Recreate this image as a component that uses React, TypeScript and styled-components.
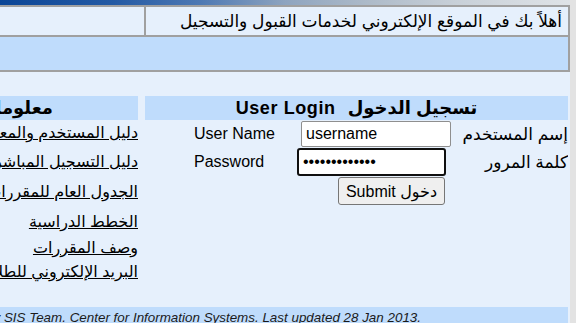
import React from "react";
import styled, { createGlobalStyle } from "styled-components";

const GlobalStyle = createGlobalStyle`
    html, body {
        margin: 0;
        padding: 0;
        background: #e3e3e3;
        overflow: hidden;
    }
    body {
        font-family: "Liberation Sans", "DejaVu Sans", Arial, sans-serif;
        font-size: 16px;
        color: #000;
    }
`;

const Page = styled.div`
    display: flex;
    width: 576px;
    height: 323px;
    overflow: hidden;
`;

const Main = styled.div`
    direction: rtl;
    width: 570px;
    flex: none;
    background: #e6f0fc;
    display: flex;
    flex-direction: column;
`;

const Strip = styled.div`
    flex: 1;
    background: #e3e3e3;
`;

const Banner = styled.div`
    height: 5px;
    background: linear-gradient(to right, #0a4596 0%, #245aa4 20%, #4d78b3 35%, #8ea4bf 50%, #aebbc9 65%, #c8d0d8 80%, #dfe3e7 100%);
`;

const HeadTable = styled.div`
    border-top: 2px solid #a0a0a0;
    border-right: 2px solid #a0a0a0;
    border-bottom: 2px solid #a0a0a0;
`;

const WelcomeRow = styled.div`
    display: grid;
    grid-template-columns: 422px 1fr;
    height: 28px;
    border-bottom: 2px solid #a0a0a0;
`;

const WelcomeCell = styled.div`
    display: flex;
    align-items: center;
    padding-right: 6px;
    white-space: nowrap;
    font-size: 17px;
`;

const EmptyCell = styled.div`
    border-right: 2px solid #a0a0a0;
`;

const BlueRow = styled.div`
    height: 33px;
    background: #bfdcfc;
`;

const Content = styled.div`
    display: flex;
    gap: 7px;
    padding-right: 2px;
    margin-top: 24px;
`;

const LoginPanel = styled.div`
    width: 423px;
    flex: none;
`;

const InfoPanel = styled.div`
    width: 138px;
    flex: none;
    overflow: hidden;
`;

const PanelHead = styled.div<{ $center?: boolean; $pad?: number }>`
    height: 24px;
    background: #bfdcfc;
    display: flex;
    align-items: center;
    justify-content: ${(p) => (p.$center ? "center" : "flex-start")};
    padding-right: ${(p) => p.$pad ?? 0}px;
    font-weight: bold;
    font-size: 18px;
    white-space: nowrap;
`;

const English = styled.span`
    letter-spacing: 0.6px;
    margin-right: 12px;
`;

const FormGrid = styled.div`
    direction: ltr;
    display: grid;
    grid-template-columns: 103px 154px 1fr;
    grid-template-rows: 26px 28px 28px;
    row-gap: 1px;
    margin-top: 1px;
    padding-left: 49px;
`;

const Label = styled.div`
    display: flex;
    align-items: center;
    white-space: nowrap;
`;

const ArabicLabel = styled(Label)`
    direction: rtl;
    justify-content: flex-start;
    font-size: 17px;
    overflow: hidden;
`;

const TextInput = styled.input<{ $focused?: boolean; $shift?: number; $width?: number }>`
    box-sizing: border-box;
    width: ${(p) => p.$width ?? 150}px;
    height: 100%;
    margin: 0 0 0 ${(p) => p.$shift ?? 0}px;
    padding: 0 4px;
    font-family: "Liberation Sans", Arial, sans-serif;
    font-size: 16px;
    color: #000;
    background: #fff;
    border: ${(p) => (p.$focused ? "2px solid #101010" : "1px solid #8f8f8f")};
    border-radius: ${(p) => (p.$focused ? "3px" : "2px")};
    outline: none;
`;

const ButtonCell = styled.div`
    grid-column: 2 / 4;
    padding-left: 41px;
`;

const SubmitButton = styled.button`
    box-sizing: border-box;
    width: 107px;
    height: 28px;
    font-family: "Liberation Sans", "DejaVu Sans", Arial, sans-serif;
    font-size: 16px;
    color: #000;
    background: #efefef;
    border: 1px solid #767676;
    border-radius: 3px;
    padding: 0;
`;

const LinkList = styled.div`
    display: flex;
    flex-direction: column;
    align-items: flex-start;
`;

const InfoLink = styled.a<{ $top: number }>`
    display: block;
    margin-top: ${(p) => p.$top}px;
    line-height: 20px;
    font-size: 16px;
    color: #000;
    text-decoration: underline;
    white-space: nowrap;
`;

const Footer = styled.div`
    margin-top: 25px;
    margin-right: 2px;
    height: 16px;
    background: #bfdcfc;
    direction: ltr;
    display: flex;
    justify-content: flex-end;
    padding-right: 147px;
    overflow: hidden;
`;

const FooterText = styled.span`
    flex: none;
    white-space: nowrap;
    font-style: italic;
    font-size: 13.4px;
    line-height: 15px;
    padding-top: 3px;
    color: #1a1a1a;
`;

const links = [
    { text: "دليل المستخدم والمعلومات العامة", top: 3 },
    { text: "دليل التسجيل المباشر للطلاب", top: 9 },
    { text: "الجدول العام للمقررات الدراسية", top: 10 },
    { text: "الخطط الدراسية", top: 10 },
    { text: "وصف المقررات", top: 6 },
    { text: "البريد الإلكتروني للطلاب", top: 4 },
];

export default function App() {
    return (
        <>
            <GlobalStyle />
            <Page>
                <Main>
                    <Banner />
                    <HeadTable>
                        <WelcomeRow>
                            <WelcomeCell>أهلاً بك في الموقع الإلكتروني لخدمات القبول والتسجيل</WelcomeCell>
                            <EmptyCell />
                        </WelcomeRow>
                        <BlueRow />
                    </HeadTable>
                    <Content>
                        <LoginPanel>
                            <PanelHead $center>
                                <span>تسجيل الدخول</span>
                                <English dir="ltr">User Login</English>
                            </PanelHead>
                            <FormGrid>
                                <Label>User Name</Label>
                                <TextInput type="text" defaultValue="username" $shift={4} />
                                <ArabicLabel>إسم المستخدم</ArabicLabel>
                                <Label>Password</Label>
                                <TextInput type="password" defaultValue="sis2013passwd" $focused $width={149} />
                                <ArabicLabel>كلمة المرور</ArabicLabel>
                                <ButtonCell>
                                    <SubmitButton type="button">Submit دخول</SubmitButton>
                                </ButtonCell>
                            </FormGrid>
                        </LoginPanel>
                        <InfoPanel>
                            <PanelHead $pad={85}>معلومات عامة</PanelHead>
                            <LinkList>
                                {links.map((l) => (
                                    <InfoLink key={l.text} href="#" $top={l.top}>
                                        {l.text}
                                    </InfoLink>
                                ))}
                            </LinkList>
                        </InfoPanel>
                    </Content>
                    <Footer>
                        <FooterText>Developed by SIS Team. Center for Information Systems. Last updated 28 Jan 2013.</FooterText>
                    </Footer>
                </Main>
                <Strip />
            </Page>
        </>
    );
}
